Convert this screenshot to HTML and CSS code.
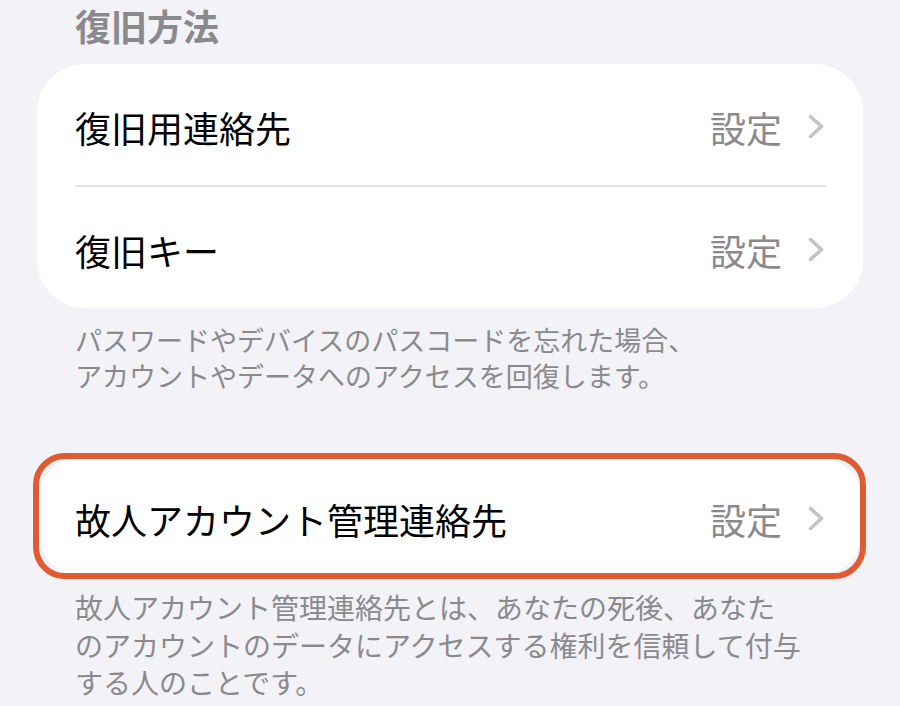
FILE: index.html
```html
<!DOCTYPE html>
<html lang="ja">
<head>
    <meta charset="UTF-8">
    <meta name="viewport" content="width=device-width, initial-scale=1.0">
    <title>復旧方法</title>
    <link rel="stylesheet" href="styles.css">
</head>
<body>
    <div class="page">
        <h2 class="section-title">復旧方法</h2>

        <div class="card">
            <div class="row">
                <span class="row-label">復旧用連絡先</span>
                <span class="row-value">設定</span>
                <svg class="chevron" viewBox="0 0 16 25" width="16" height="25">
                    <polyline points="2.5,2.5 13.5,12.5 2.5,22.5" />
                </svg>
            </div>
            <div class="divider"></div>
            <div class="row">
                <span class="row-label">復旧キー</span>
                <span class="row-value">設定</span>
                <svg class="chevron" viewBox="0 0 16 25" width="16" height="25">
                    <polyline points="2.5,2.5 13.5,12.5 2.5,22.5" />
                </svg>
            </div>
        </div>
        <p class="footer footer-first">パスワードやデバイスのパスコードを忘れた場合、<br>アカウントやデータへのアクセスを回復します。</p>

        <div class="card card-marked">
            <div class="row">
                <span class="row-label">故人アカウント管理連絡先</span>
                <span class="row-value">設定</span>
                <svg class="chevron" viewBox="0 0 16 25" width="16" height="25">
                    <polyline points="2.5,2.5 13.5,12.5 2.5,22.5" />
                </svg>
            </div>
            <div class="mark"></div>
        </div>
        <p class="footer footer-second">故人アカウント管理連絡先とは、あなたの死後、あなた<br>のアカウントのデータにアクセスする権利を信頼して付与<br>する人のことです。</p>
    </div>
</body>
</html>
```

FILE: styles.css
```css
* {
    margin: 0;
    padding: 0;
    box-sizing: border-box;
}

body {
    font-family: "Noto Sans CJK JP", "Noto Sans", sans-serif;
    background: #f2f2f7;
    color: #000;
    overflow: hidden;
}

.page {
    padding: 0 37px;
}

.section-title {
    font-size: 36px;
    font-weight: 700;
    line-height: 50px;
    color: #8a8a8e;
    padding-left: 38px;
    margin-bottom: 14px;
}

.card {
    background: white;
    border-radius: 48px;
}

.row {
    display: flex;
    align-items: center;
    height: 121px;
    padding: 0 39px 0 38px;
}

.row-label {
    flex: 1;
    font-size: 36px;
    line-height: 1;
    padding-top: 4px;
}

.row-value {
    font-size: 36px;
    line-height: 1;
    color: #8a8a8e;
    margin-right: 26px;
    padding-top: 4px;
}

.chevron {
    display: block;
    margin-top: 3px;
}

.chevron polyline {
    fill: none;
    stroke: #c4c4c7;
    stroke-width: 3.6;
    stroke-linecap: round;
    stroke-linejoin: round;
}

.divider {
    height: 2px;
    background: #e3e3e7;
    margin: 0 37px 0 38px;
}

.footer {
    color: #8a8a8e;
    padding-left: 38px;
}

.footer-first {
    font-size: 27px;
    line-height: 36px;
    margin-top: 14px;
}

.card-marked {
    position: relative;
    margin-top: 62px;
}

.mark {
    position: absolute;
    top: -3px;
    bottom: -2px;
    left: -4px;
    right: -3px;
    border: 6px solid #e05a32;
    border-radius: 32px;
}

.footer-second {
    font-size: 28px;
    line-height: 37.5px;
    margin-top: 12px;
}
```
